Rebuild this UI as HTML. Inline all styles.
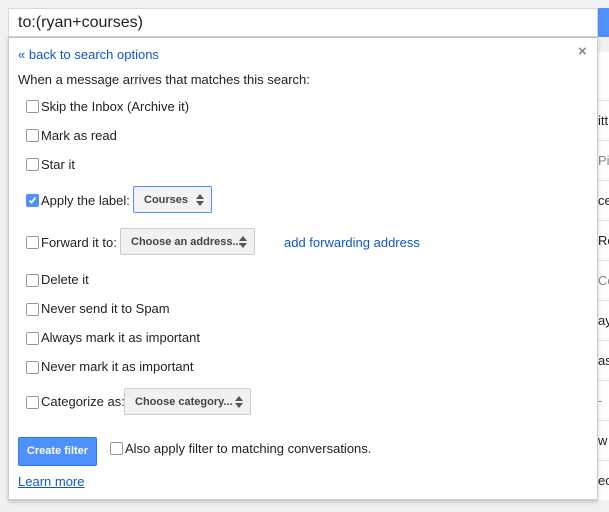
<!DOCTYPE html>
<html><head><style>
body{margin:0;width:609px;height:512px;position:relative;overflow:hidden;background:#f1f1f1;font-family:"Liberation Sans",Arial,sans-serif;}
.strip{position:absolute;left:598px;top:52px;width:11px;height:448px;background:#fff;}
.strip div{position:absolute;left:0;width:11px;border-top:1px solid #e5e5e5;font-size:13px;color:#222;white-space:nowrap;overflow:hidden;height:39px;line-height:39px;}
.search{position:absolute;left:8px;top:8px;width:590px;height:29px;background:#fff;border:1px solid #d9d9d9;box-sizing:border-box;font-size:16px;color:#222;padding-left:9px;line-height:27px;}
.btn{position:absolute;left:598px;top:8px;width:11px;height:29px;background:#4d90fe;}
.panel{position:absolute;left:8px;top:37px;width:590px;height:463px;background:#fff;border:1px solid #ccc;border-top:1px solid #bbb;box-sizing:border-box;box-shadow:0 2px 4px rgba(0,0,0,.2);}
.t{position:absolute;font-size:13px;color:#222;white-space:nowrap;}
a{color:#15c;text-decoration:none;}
.cb{position:absolute;left:17px;width:11px;height:11px;border:1px solid #999;border-radius:2px;background:#fff;}
.sel{position:absolute;height:27px;border:1px solid #ccc;border-radius:2px;background:#f1f1f1;box-sizing:border-box;font-size:11px;font-weight:bold;color:#444;line-height:26px;padding-left:10px;}
.sel:after{content:"";position:absolute;right:7px;top:7px;border:4px solid transparent;border-bottom:5px solid #555;border-top:0;}
.sel:before{content:"";position:absolute;right:7px;top:14px;border:4px solid transparent;border-top:5px solid #555;border-bottom:0;}
</style></head><body>
<div class="strip">
<div style="top:48px">itt</div><div style="top:88px;color:#888">Pic</div><div style="top:128px">ce</div><div style="top:168px">Re</div><div style="top:208px;color:#888">Co</div><div style="top:248px">ay</div><div style="top:288px">as</div><div style="top:328px;color:#888">-</div><div style="top:368px">w</div><div style="top:408px">ect</div>
</div>
<div class="search">to:(ryan+courses)</div>
<div class="btn"></div>
<div class="panel">
<div class="t" style="left:9px;top:9px"><a>« back to search options</a></div>
<div class="t" style="left:569px;top:5px;color:#888;font-size:15px;font-weight:bold">×</div>
<div class="t" style="left:9px;top:34px">When a message arrives that matches this search:</div>
<div class="cb" style="top:62px"></div><div class="t" style="left:32px;top:61px">Skip the Inbox (Archive it)</div>
<div class="cb" style="top:91px"></div><div class="t" style="left:32px;top:90px">Mark as read</div>
<div class="cb" style="top:120px"></div><div class="t" style="left:32px;top:119px">Star it</div>
<div class="cb" style="top:156px;background:#4d90fe;border-color:#4d90fe"><svg width="11" height="11" style="position:absolute;left:0;top:0"><path d="M2.5 5.5l2 2l4-5" stroke="#fff" stroke-width="1.8" fill="none"/></svg></div>
<div class="t" style="left:32px;top:155px">Apply the label:</div>
<div class="sel" style="left:124px;top:148px;width:79px;border-color:#4d90fe;background:#f3f3f3">Courses</div>
<div class="cb" style="top:198px"></div><div class="t" style="left:32px;top:197px">Forward it to:</div>
<div class="sel" style="left:111px;top:190px;width:135px">Choose an address...</div>
<div class="t" style="left:275px;top:197px"><a>add forwarding address</a></div>
<div class="cb" style="top:236px"></div><div class="t" style="left:32px;top:234px">Delete it</div>
<div class="cb" style="top:265px"></div><div class="t" style="left:32px;top:263px">Never send it to Spam</div>
<div class="cb" style="top:294px"></div><div class="t" style="left:32px;top:292px">Always mark it as important</div>
<div class="cb" style="top:323px"></div><div class="t" style="left:32px;top:321px">Never mark it as important</div>
<div class="cb" style="top:358px"></div><div class="t" style="left:32px;top:356px">Categorize as:</div>
<div class="sel" style="left:115px;top:350px;width:127px">Choose category...</div>
<div style="position:absolute;left:9px;top:399px;width:79px;height:29px;background:#4d90fe;border:1px solid #3079ed;box-sizing:border-box;border-radius:2px;color:#fff;font-size:11px;font-weight:bold;text-align:center;line-height:27px">Create filter</div>
<div class="cb" style="left:101px;top:404px"></div><div class="t" style="left:116px;top:403px">Also apply filter to matching conversations.</div>
<div class="t" style="left:9px;top:436px"><a style="text-decoration:underline">Learn more</a></div>
</div>
</body></html>
